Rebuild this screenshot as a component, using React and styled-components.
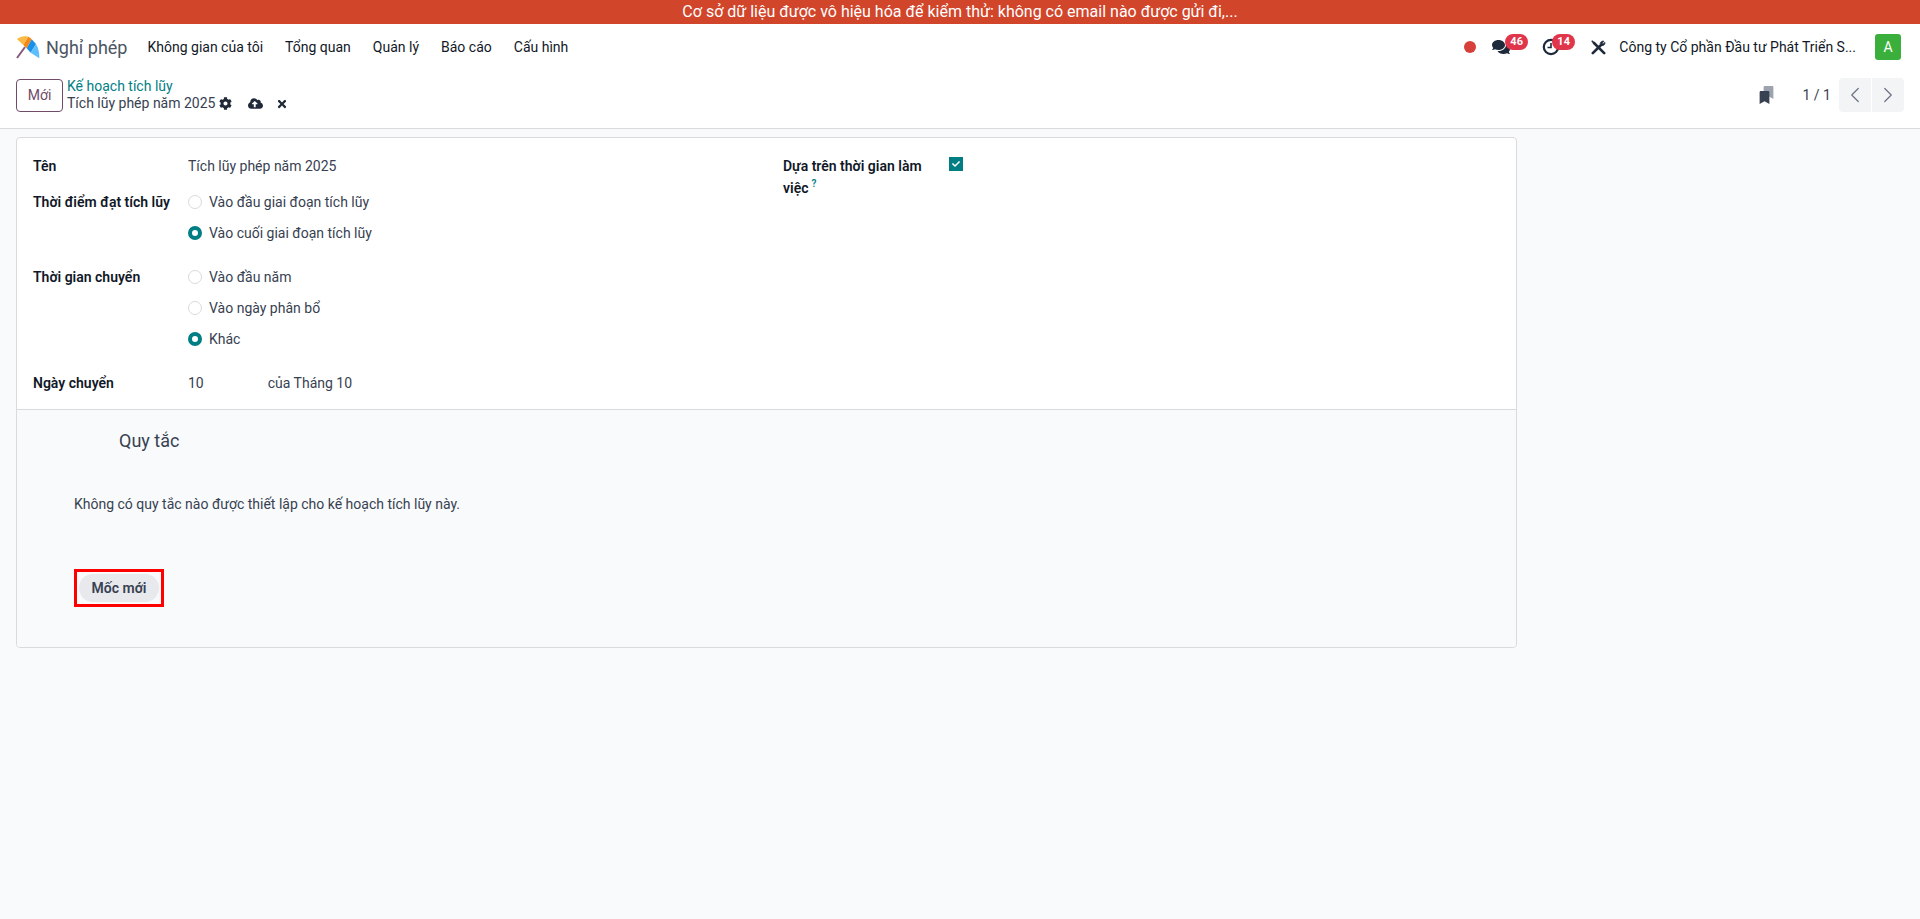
import React from "react";
import styled, { createGlobalStyle } from "styled-components";
import { FaCog, FaCloudUploadAlt, FaTimes, FaComments, FaBookmark, FaCheck } from "react-icons/fa";
import { ChevronLeft, ChevronRight } from "lucide-react";

const GlobalStyle = createGlobalStyle`
	html, body {
		margin: 0;
		height: 100%;
		background-color: #f9fafb;
		font-family: Roboto, "Noto Sans", sans-serif;
		font-size: 14px;
		color: #374151;
	}
	* {
		box-sizing: border-box;
	}
`;

const Banner = styled.div`
	height: 24px;
	background-color: #d1452b;
	color: #fff;
	font-size: 16px;
	line-height: 24px;
	text-align: center;
	white-space: nowrap;
`;

const Navbar = styled.header`
	height: 46px;
	background-color: #fff;
	display: flex;
	align-items: center;
	padding: 0 19px 0 16px;
`;
const Brand = styled.div`
	display: flex;
	align-items: center;
	gap: 6px;
	margin-right: 20px;
	font-size: 18px;
	color: #4b5563;
`;
const Menu = styled.nav`
	display: flex;
	gap: 22px;
	color: #111827;
`;
const Systray = styled.div`
	margin-left: auto;
	display: flex;
	align-items: center;
	color: #111827;
`;
const RecordDot = styled.span`
	width: 12px;
	height: 12px;
	border-radius: 50%;
	background-color: #d63f3a;
	margin-right: 16px;
`;
const TrayIcon = styled.span`
	position: relative;
	display: flex;
	align-items: center;
	font-size: 18px;
	color: #1e293b;
	margin-right: ${(p) => p.$gap}px;
`;
const Badge = styled.span`
	position: absolute;
	left: ${(p) => p.$left}px;
	top: -4px;
	height: 16px;
	min-width: 22px;
	padding: 0 5px;
	border-radius: 8px;
	background-color: #e0354b;
	color: #fff;
	font-size: 11px;
	font-weight: 700;
	line-height: 16px;
	text-align: center;
`;
const Company = styled.span`
	color: #111827;
	margin-right: 19px;
`;
const Avatar = styled.span`
	width: 26px;
	height: 26px;
	border-radius: 3px;
	background-color: #3aaf3c;
	color: #fff;
	font-size: 14px;
	line-height: 26px;
	text-align: center;
`;

const ControlPanel = styled.div`
	height: 59px;
	background-color: #fff;
	border-bottom: 1px solid #d8dadd;
	display: flex;
	align-items: center;
	padding: 0 16px 8px;
`;
const NewButton = styled.button`
	width: 47px;
	height: 33px;
	background-color: #fff;
	border: 1px solid #714b67;
	border-radius: 4px;
	color: #714b67;
	font: inherit;
	padding: 0;
	margin-right: 4px;
`;
const Breadcrumb = styled.div`
	display: flex;
	flex-direction: column;
	line-height: 17px;
`;
const BreadcrumbLink = styled.span`
	color: #017e84;
`;
const BreadcrumbCurrent = styled.span`
	display: flex;
	align-items: center;
	color: #374151;
`;
const StatusIcon = styled.span`
	display: inline-flex;
	font-size: ${(p) => p.$size || 13}px;
	color: #1f2937;
	margin-left: ${(p) => p.$gap}px;
`;
const Pager = styled.div`
	margin-left: auto;
	display: flex;
	align-items: center;
`;
const BookmarkStack = styled.span`
	position: relative;
	width: 14px;
	height: 19px;
	margin-right: 31px;
	font-size: 13px;
	color: #374151;
`;
const BackBookmark = styled.span`
	position: absolute;
	top: 0;
	left: 4px;
	color: #9ca3af;
`;
const FrontBookmark = styled.span`
	position: absolute;
	top: 5px;
	left: 0;
`;
const PagerText = styled.span`
	color: #374151;
	margin-right: 7px;
`;
const PagerButton = styled.button`
	width: 32px;
	height: 34px;
	border: 0;
	padding: 0;
	margin-left: 1px;
	background-color: #f3f4f6;
	color: #6b7280;
	display: flex;
	align-items: center;
	justify-content: center;
	border-radius: ${(p) => (p.$last ? "0 4px 4px 0" : "4px 0 0 4px")};
`;

const Content = styled.main`
	padding: 8px 0 0 16px;
`;
const Sheet = styled.section`
	width: 1501px;
	height: 511px;
	background-color: #fff;
	border: 1px solid #d8dadd;
	border-radius: 4px;
	display: flex;
	flex-direction: column;
`;
const FormTop = styled.div`
	height: 271px;
	padding: 17px 16px 0;
	display: grid;
	grid-template-columns: 750px 1fr;
`;
const FieldColumn = styled.div`
	display: flex;
	flex-direction: column;
`;
const FieldRow = styled.div`
	display: grid;
	grid-template-columns: ${(p) => p.$label || 155}px 1fr;
	margin-bottom: ${(p) => p.$after || 0}px;
`;
const Label = styled.label`
	font-weight: 600;
	color: #111827;
	line-height: 22px;
`;
const Help = styled.sup`
	color: #017e84;
	font-size: 10px;
	margin-left: 3px;
	line-height: 0;
`;
const Value = styled.span`
	color: #374151;
	line-height: 22px;
`;
const ValueGap = styled.span`
	display: inline-block;
	width: 64px;
`;
const RadioList = styled.div`
	display: flex;
	flex-direction: column;
	gap: 9px;
`;
const RadioRow = styled.div`
	display: flex;
	align-items: center;
	gap: 7px;
	height: 22px;
`;
const RadioMark = styled.span`
	width: 14px;
	height: 14px;
	border-radius: 50%;
	background-color: #fff;
	border: ${(p) => (p.$on ? "4px solid #017e84" : "1px solid #d8dadd")};
`;
const CheckMark = styled.span`
	width: 14px;
	height: 14px;
	margin-top: 2px;
	background-color: #017e84;
	color: #fff;
	font-size: 8px;
	display: flex;
	align-items: center;
	justify-content: center;
`;
const RulesPane = styled.div`
	flex: 1;
	background-color: #f9fafb;
	border-top: 1px solid #d8dadd;
	border-radius: 0 0 4px 4px;
	padding: 18px 0 0 57px;
`;
const RulesTitle = styled.h3`
	margin: 0 0 40px 45px;
	font-size: 18px;
	font-weight: 400;
	line-height: 25px;
	color: #374151;
`;
const RulesEmpty = styled.p`
	margin: 0 0 54px;
	line-height: 22px;
	color: #374151;
`;
const Highlight = styled.div`
	display: inline-block;
	border: 3px solid #f00;
	padding: 2px;
`;
const MilestoneButton = styled.button`
	display: block;
	width: 80px;
	height: 28px;
	border: 0;
	border-radius: 14px;
	padding: 0;
	background-color: #e7e9ed;
	color: #374151;
	font: inherit;
	font-weight: 600;
`;

const UmbrellaLogo = () => (
	<svg width="24" height="24" viewBox="-1 0 24 24">
		<path d="M0 23 L8 12" stroke="#875a7b" strokeWidth="2" fill="none" />
		<path d="M0 4.3 C3 1.5 7 0.5 11.3 1.7 L6.3 10 Z" fill="#fbb945" />
		<path d="M11.3 1.7 C12.5 2.2 13.7 3.2 14.7 4.3 L9.7 13.3 L6.3 10 Z" fill="#f78613" />
		<path d="M14.7 4.3 L19 9 L13.7 17.7 L9.7 13.3 Z" fill="#1a8fe8" />
		<path d="M19 9 C21.5 13 22.5 18 22.3 23.3 L13.7 17.7 Z" fill="#5ebfff" />
	</svg>
);

const ClockIcon = () => (
	<svg width="18" height="18" viewBox="0 0 18 18" fill="none" stroke="#1e293b">
		<circle cx="9" cy="9" r="7.2" strokeWidth="2.2" />
		<path d="M9 5 V9.5 H5.5" strokeWidth="1.6" />
	</svg>
);

const ToolsIcon = () => (
	<svg width="15" height="15" viewBox="0 0 15 15" fill="none" stroke="#1e293b" strokeLinecap="round">
		<path d="M3 3 L13.2 13.2" strokeWidth="2.6" />
		<path d="M1.2 1.2 L3.4 3.4" strokeWidth="1.6" />
		<path d="M1.8 13.2 L10 5" strokeWidth="2.6" />
		<path d="M9.2 3.2 C9.6 1.4 11.6 0.6 13 1.2 L11.2 3.2 L12 4 L14 2.2 C14.4 4 13 6 10.8 5.6 Z" fill="#1e293b" strokeWidth="0.6" />
	</svg>
);

const Radio = ({ on, children }) => (
	<RadioRow>
		<RadioMark $on={on} />
		<Value>{children}</Value>
	</RadioRow>
);

export default function App() {
	return (
		<>
			<GlobalStyle />
			<Banner>Cơ sở dữ liệu được vô hiệu hóa để kiểm thử: không có email nào được gửi đi,...</Banner>
			<Navbar>
				<Brand>
					<UmbrellaLogo />
					Nghỉ phép
				</Brand>
				<Menu>
					<span>Không gian của tôi</span>
					<span>Tổng quan</span>
					<span>Quản lý</span>
					<span>Báo cáo</span>
					<span>Cấu hình</span>
				</Menu>
				<Systray>
					<RecordDot />
					<TrayIcon $gap={32}>
						<FaComments />
						<Badge $left={13}>46</Badge>
					</TrayIcon>
					<TrayIcon $gap={31}>
						<ClockIcon />
						<Badge $left={10}>14</Badge>
					</TrayIcon>
					<TrayIcon $gap={13}>
						<ToolsIcon />
					</TrayIcon>
					<Company>Công ty Cổ phần Đầu tư Phát Triển S...</Company>
					<Avatar>A</Avatar>
				</Systray>
			</Navbar>
			<ControlPanel>
				<NewButton>Mới</NewButton>
				<Breadcrumb>
					<BreadcrumbLink>Kế hoạch tích lũy</BreadcrumbLink>
					<BreadcrumbCurrent>
						Tích lũy phép năm 2025
						<StatusIcon $gap={4}><FaCog /></StatusIcon>
						<StatusIcon $gap={16} $size={15}><FaCloudUploadAlt /></StatusIcon>
						<StatusIcon $gap={13} $size={12}><FaTimes /></StatusIcon>
					</BreadcrumbCurrent>
				</Breadcrumb>
				<Pager>
					<BookmarkStack>
						<BackBookmark><FaBookmark /></BackBookmark>
						<FrontBookmark><FaBookmark /></FrontBookmark>
					</BookmarkStack>
					<PagerText>1 / 1</PagerText>
					<PagerButton><ChevronLeft size={26} strokeWidth={1.1} /></PagerButton>
					<PagerButton $last><ChevronRight size={26} strokeWidth={1.1} /></PagerButton>
				</Pager>
			</ControlPanel>
			<Content>
				<Sheet>
					<FormTop>
						<FieldColumn>
							<FieldRow $after={14}>
								<Label>Tên</Label>
								<Value>Tích lũy phép năm 2025</Value>
							</FieldRow>
							<FieldRow $after={22}>
								<Label>Thời điểm đạt tích lũy</Label>
								<RadioList>
									<Radio>Vào đầu giai đoạn tích lũy</Radio>
									<Radio on>Vào cuối giai đoạn tích lũy</Radio>
								</RadioList>
							</FieldRow>
							<FieldRow $after={22}>
								<Label>Thời gian chuyển</Label>
								<RadioList>
									<Radio>Vào đầu năm</Radio>
									<Radio>Vào ngày phân bổ</Radio>
									<Radio on>Khác</Radio>
								</RadioList>
							</FieldRow>
							<FieldRow>
								<Label>Ngày chuyển</Label>
								<Value>10<ValueGap />của Tháng 10</Value>
							</FieldRow>
						</FieldColumn>
						<FieldColumn>
							<FieldRow $label={166}>
								<Label>Dựa trên thời gian làm việc<Help>?</Help></Label>
								<CheckMark><FaCheck /></CheckMark>
							</FieldRow>
						</FieldColumn>
					</FormTop>
					<RulesPane>
						<RulesTitle>Quy tắc</RulesTitle>
						<RulesEmpty>Không có quy tắc nào được thiết lập cho kế hoạch tích lũy này.</RulesEmpty>
						<Highlight>
							<MilestoneButton>Mốc mới</MilestoneButton>
						</Highlight>
					</RulesPane>
				</Sheet>
			</Content>
		</>
	);
}
